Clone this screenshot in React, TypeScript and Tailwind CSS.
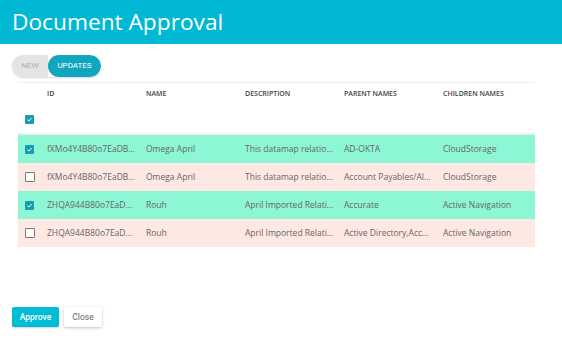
import { useState } from 'react';

type Row = {
  id: string;
  name: string;
  description: string;
  parents: string;
  children: string;
  kind: 'new' | 'old';
};

const rows: Row[] = [
  { id: 'fXMo4Y4B80o7EaDB...', name: 'Omega April', description: 'This datamap relatio...', parents: 'AD-OKTA', children: 'CloudStorage', kind: 'new' },
  { id: 'fXMo4Y4B80o7EaDB...', name: 'Omega April', description: 'This datamap relatio...', parents: 'Account Payables/Al...', children: 'CloudStorage', kind: 'old' },
  { id: 'ZHQA944B80o7EaD...', name: 'Rouh', description: 'April Imported Relati...', parents: 'Accurate', children: 'Active Navigation', kind: 'new' },
  { id: 'ZHQA944B80o7EaD...', name: 'Rouh', description: 'April Imported Relati...', parents: 'Active Directory,Acc...', children: 'Active Navigation', kind: 'old' },
];

const Checkbox = ({ checked }: { checked: boolean }) =>
  checked ? (
    <span className="flex h-[9px] w-[9px] items-center justify-center rounded-[1px] bg-[#1b9cb3]">
      <svg viewBox="0 0 10 10" className="h-[7px] w-[7px]">
        <path d="M2 5.2 L4.2 7.2 L8 3" fill="none" stroke="white" strokeWidth="1.4" />
      </svg>
    </span>
  ) : (
    <span className="block h-[10px] w-[10px] rounded-[1px] border-[1.5px] border-[#777] bg-white" />
  );

const App = () => {
  const [tab, setTab] = useState<'new' | 'updates'>('updates');

  return (
    <div className="h-[348px] w-[562px] bg-white font-['Open_Sans',sans-serif] text-[#666]">
      <header className="flex h-[44px] items-center bg-[#00b8d4] px-[12px]">
        <h1 className="text-[22.7px] leading-none text-white">Document Approval</h1>
      </header>

      <div className="px-[12px] pt-[11px]">
        {/* New / Updates toggle */}
        <div className="flex h-[22px] w-[89px] overflow-hidden rounded-full font-['Roboto',sans-serif] text-[8px] shadow-[0_1px_2px_rgba(0,0,0,0.15)]">
          <button
            className={`w-[36px] ${tab === 'new' ? 'bg-[#10a6bd] text-white' : 'bg-[#e4e4e4] text-[#b0b0b0]'}`}
            onClick={() => setTab('new')}
          >
            NEW
          </button>
          <button
            className={`flex-1 rounded-full ${tab === 'updates' ? 'bg-[#10a6bd] text-white' : 'bg-[#e4e4e4] text-[#b0b0b0]'}`}
            onClick={() => setTab('updates')}
          >
            UPDATES
          </button>
        </div>

        <div className="ml-[6px] mt-[5px] w-[517px] border-t border-[#eee]">
          <div className="grid h-[22px] grid-cols-[29px_99px_99px_99px_99px_1fr] items-center text-[7px] font-semibold text-[#444]">
            <span />
            <span>ID</span>
            <span>NAME</span>
            <span>DESCRIPTION</span>
            <span>PARENT NAMES</span>
            <span>CHILDREN NAMES</span>
          </div>
          <div className="flex h-[30px] items-center border-b-2 border-[#eee] pl-[7px]">
            <Checkbox checked />
          </div>
          {rows.map((r, i) => (
            <div
              key={i}
              className={`grid h-[28px] grid-cols-[29px_99px_99px_99px_99px_1fr] items-center text-[8.5px] ${
                r.kind === 'new' ? 'bg-[#8df6d4]' : 'bg-[#fee8e3]'
              }`}
            >
              <span className="pl-[7px]">
                <Checkbox checked={r.kind === 'new'} />
              </span>
              <span className="truncate">{r.id}</span>
              <span>{r.name}</span>
              <span>{r.description}</span>
              <span>{r.parents}</span>
              <span>{r.children}</span>
            </div>
          ))}
        </div>
      </div>

      <div className="mt-[60px] flex gap-[5px] px-[12px] font-['Roboto',sans-serif] text-[8.5px]">
        <button className="h-[20px] w-[47px] rounded-[2px] bg-[#00bcd4] font-medium text-white shadow-[0_1px_2px_rgba(0,0,0,0.2)]">
          Approve
        </button>
        <button className="h-[20px] w-[38px] rounded-[2px] bg-white text-[#666] shadow-[0_1px_3px_rgba(0,0,0,0.25)]">
          Close
        </button>
      </div>
    </div>
  );
};

export default App;
